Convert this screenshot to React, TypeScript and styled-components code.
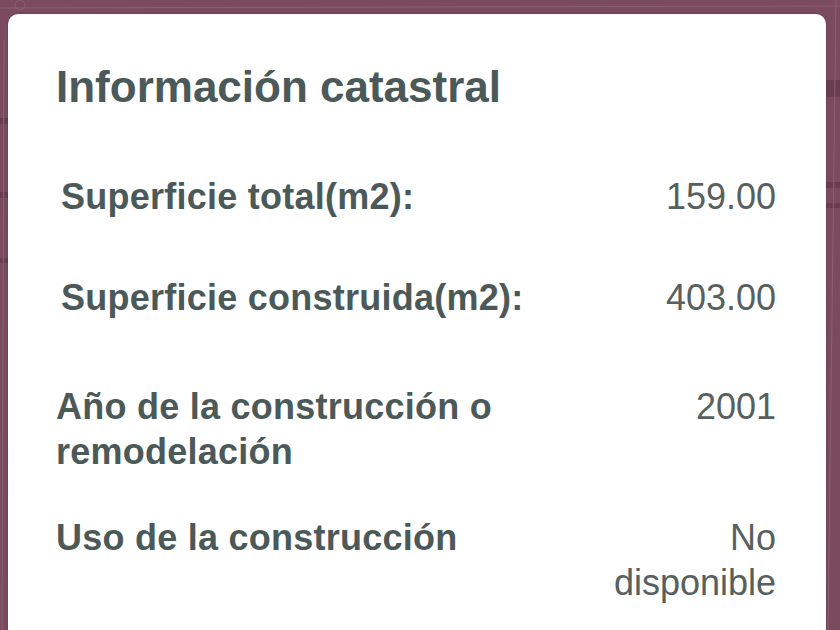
import styled, { createGlobalStyle } from "styled-components";

const GlobalStyle = createGlobalStyle`
  html, body {
    margin: 0;
    padding: 0;
    overflow: hidden;
    background: #7a4a5f;
  }
  body {
    font-family: "Liberation Sans", Arial, sans-serif;
  }
`;

const Page = styled.div`
  position: relative;
  width: 840px;
  height: 630px;
  overflow: hidden;
  box-sizing: border-box;
  padding: 14px 14px 0 8px;
  background: #7a4a5f;
`;

const MapLayer = styled.svg`
  position: absolute;
  inset: 0;
  width: 100%;
  height: 100%;
`;

const Card = styled.section`
  position: relative;
  box-sizing: border-box;
  width: 818px;
  padding: 47px 50px 60px 48px;
  background: #ffffff;
  border-radius: 10px;
  box-shadow: 0 0 2px rgba(0, 0, 0, 0.25);
`;

const Title = styled.h2`
  margin: 0;
  font-size: 44px;
  font-weight: 700;
  line-height: 1.2;
  color: #4b5959;
`;

const List = styled.div`
  display: flex;
  flex-direction: column;
  margin-top: 60px;
`;

const Row = styled.div<{ $gap: number; $indent?: number }>`
  display: grid;
  grid-template-columns: 1fr 170px;
  column-gap: 20px;
  align-items: start;
  margin-top: ${(p) => p.$gap}px;
  padding-left: ${(p) => p.$indent ?? 0}px;
`;

const Label = styled.div`
  font-size: 36px;
  font-weight: 700;
  line-height: 45px;
  letter-spacing: 0.25px;
  color: #4b5959;
`;

const Value = styled.div`
  font-size: 36px;
  font-weight: 400;
  line-height: 45px;
  text-align: right;
  color: #56615f;
`;

const rows = [
  { label: "Superficie total(m2):", value: "159.00", gap: 0, indent: 5 },
  { label: "Superficie construida(m2):", value: "403.00", gap: 56, indent: 5 },
  { label: "Año de la construcción o remodelación", value: "2001", gap: 64, indent: 0 },
  { label: "Uso de la construcción", value: "No disponible", gap: 41, indent: 0 },
];

export default function App() {
  return (
    <>
      <GlobalStyle />
      <Page>
        <MapLayer viewBox="0 0 840 630" preserveAspectRatio="none">
          <g fill="#6a3c50">
            <rect x="826" y="80" width="14" height="17" />
            <rect x="826" y="182" width="14" height="6" />
            <rect x="826" y="203" width="14" height="5" />
            <rect x="0" y="118" width="8" height="6" />
            <rect x="0" y="192" width="8" height="6" />
            <rect x="0" y="258" width="8" height="5" />
          </g>
          <g stroke="#8d6073" strokeWidth="1" fill="none">
            <circle cx="20" cy="5" r="5" />
            <line x1="4" y1="40" x2="2" y2="630" />
            <line x1="836" y1="0" x2="828" y2="630" />
            <line x1="0" y1="8" x2="840" y2="6" />
          </g>
        </MapLayer>
        <Card>
          <Title>Información catastral</Title>
          <List>
            {rows.map((r) => (
              <Row key={r.label} $gap={r.gap} $indent={r.indent}>
                <Label>{r.label}</Label>
                <Value>{r.value}</Value>
              </Row>
            ))}
          </List>
        </Card>
      </Page>
    </>
  );
}
